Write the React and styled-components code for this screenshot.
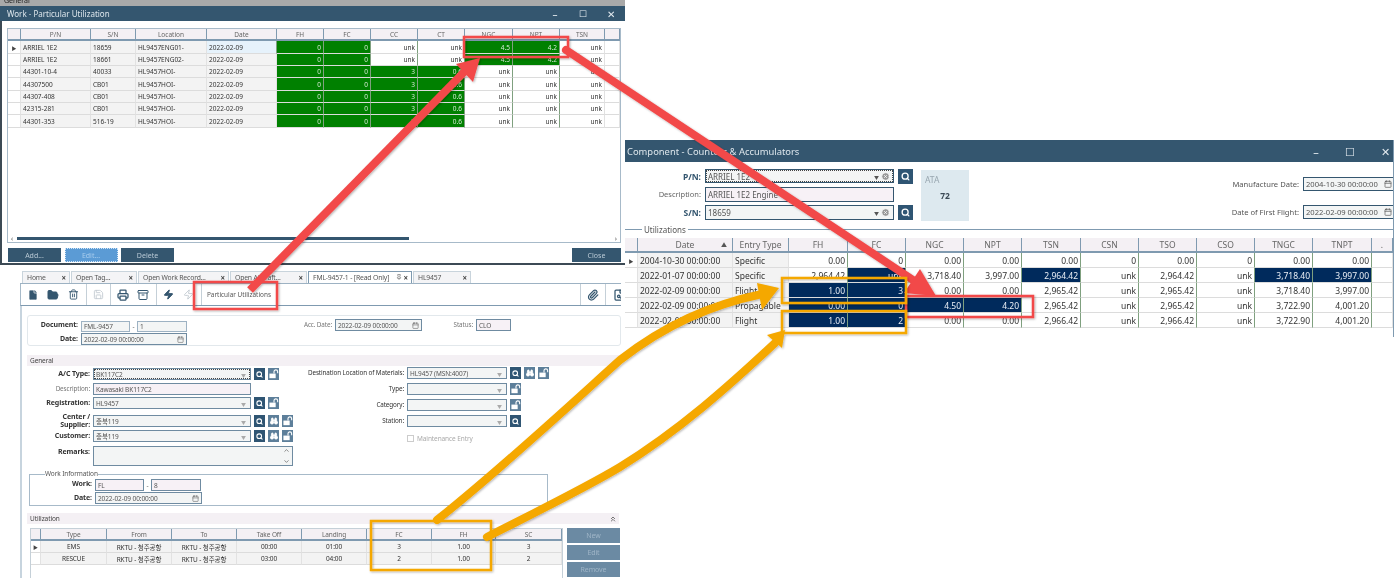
import React from 'react';
import styled, { createGlobalStyle } from 'styled-components';
import { File, FolderOpen, Trash2, Save, Printer, Archive, Zap, Paperclip, FileSearch, Search, Binoculars, Calendar, ChevronUp, ChevronDown, ChevronsUp, Pin, CircleX } from 'lucide-react';

const Global = createGlobalStyle`
  html, body { margin: 0; padding: 0; background: #fff; }
  * { box-sizing: border-box; }
  body { font-family: "Noto Sans", "Noto Sans CJK KR", sans-serif; color: #333; }
`;

const Desk = styled.div`
  position: relative;
  width: 1394px;
  height: 578px;
  overflow: hidden;
  background: #fff;
  filter: blur(0.35px);
`;

const Window = styled.div`
  position: absolute;
  left: ${({ $x }) => $x}px;
  top: ${({ $y }) => $y}px;
  width: ${({ $w }) => $w}px;
  height: ${({ $h }) => $h}px;
  background: #fff;
  overflow: hidden;
  display: flex;
  flex-direction: column;
`;

const ComponentFrame = styled(Window)`
  border-right: 1.5px solid #7f9ab0;
`;

const TopStrip = styled.div`
  height: 6px;
  flex: none;
  background: #a9a9a9;
  font-size: 7px;
  line-height: 2px;
  padding-left: 4px;
  color: #222;
  overflow: hidden;
`;

const TitleBar = styled.div`
  flex: none;
  height: ${({ $h }) => $h}px;
  background: #34566f;
  color: #dde6ec;
  font-size: ${({ $fs }) => $fs}px;
  display: flex;
  align-items: center;
  padding: 0 0 0 2px;
`;

const TitleText = styled.span`
  flex: 1;
  padding-left: ${({ $pl }) => $pl || 0}px;
`;

const Ctl = styled.span`
  width: ${({ $w }) => $w}px;
  padding-left: ${({ $pl }) => $pl || 0}px;
  text-align: center;
  color: #e4ebf0;
  font-size: ${({ $fs }) => $fs || 10}px;
`;

const W1Body = styled.div`
  flex: 1;
  display: flex;
  flex-direction: column;
  border-left: 2px solid #3c4a55;
  border-bottom: 2px solid #3c4a55;
  padding: 7px 4px 1px 5px;
`;

const GridBox = styled.div`
  flex: 1;
  display: flex;
  flex-direction: column;
  border: 1px solid #a7bac9;
`;

const Table = styled.div`
  display: grid;
  grid-template-columns: ${({ $cols }) => $cols};
  grid-auto-rows: ${({ $rowH }) => $rowH}px;
  flex: ${({ $grow }) => ($grow ? 1 : 'none')};
  align-content: start;
  font-size: ${({ $fs }) => $fs}px;
`;

const Head = styled.div`
  background: #f4f0f4;
  border-right: 1px solid #7f9ab0;
  border-bottom: 2px solid #7f9ab0;
  color: #666;
  display: flex;
  align-items: center;
  justify-content: center;
  white-space: nowrap;
  overflow: hidden;
  position: relative;
`;

const Cell = styled.div`
  background: ${({ $bg }) => $bg || '#fff'};
  color: ${({ $fg }) => $fg || '#333'};
  border-right: 1px solid ${({ $bg }) => ($bg && $bg !== '#f3f3f3' ? '#7fa07f' : '#e2e2e2')};
  border-bottom: 1px solid #dcdcdc;
  display: flex;
  align-items: center;
  justify-content: ${({ $al }) => ($al === 'r' ? 'flex-end' : $al === 'c' ? 'center' : 'flex-start')};
  padding: 0 2px;
  white-space: nowrap;
  overflow: hidden;
`;

const RowMark = styled(Cell)`
  justify-content: center;
  font-size: 5px;
  color: #444;
  background: #fff;
  padding: 0;
`;

const ScrollTrack = styled.div`
  height: 8px;
  display: flex;
  align-items: center;
  font-size: 7px;
  color: #555;
  padding: 0 3px;
`;

const ScrollThumb = styled.div`
  width: 392px;
  height: 3px;
  margin: 0 5px 0 4px;
  background: #34566f;
`;

const ScrollRest = styled.div`
  flex: 1;
  height: 3px;
  background: #fff;
  margin-right: 4px;
`;

const BtnRow = styled.div`
  display: flex;
  gap: 3.5px;
  padding: 5px 0 0 1px;
`;

const DarkBtn = styled.div`
  width: ${({ $w }) => $w}px;
  height: 14px;
  margin-left: ${({ $ml }) => $ml || 0};
  background: ${({ $on }) => ($on ? '#5b9bd5' : '#34566f')};
  color: ${({ $on }) => ($on ? '#a8cdee' : '#b9c9d5')};
  border: ${({ $on }) => ($on ? '1px dotted #d2e6f7' : 'none')};
  font-size: 7px;
  display: flex;
  align-items: center;
  justify-content: center;
`;

const Tabs = styled.div`
  flex: none;
  height: 13px;
  display: flex;
  gap: 1px;
  padding-left: 2px;
  border-bottom: 1px solid #9db2c3;
  font-size: 6.8px;
  letter-spacing: -0.15px;
`;

const Tab = styled.div`
  width: ${({ $w }) => $w}px;
  background: ${({ $active }) => ($active ? '#fff' : '#f4f4f6')};
  border: 1px solid ${({ $active }) => ($active ? '#7f9ab0' : '#c9d4dc')};
  border-bottom: none;
  display: flex;
  align-items: center;
  justify-content: space-between;
  padding: 0 3px 1px 4px;
  color: #555;
  white-space: nowrap;
  overflow: hidden;
`;

const TabClose = styled.span`
  font-size: 8px;
  color: #444;
  font-weight: 700;
  display: flex;
  align-items: center;
  gap: 2px;
`;

const Toolbar = styled.div`
  flex: none;
  height: 22px;
  display: flex;
  padding-left: 2px;
  overflow: hidden;
  border-left: 1px solid #a7bac9;
  border-bottom: 1px solid #7f9ab0;
  color: #34566f;
`;

const ToolGroup = styled.div`
  flex: none;
  display: flex;
  align-items: center;
  padding-right: ${({ $pr }) => $pr}px;
  margin-right: ${({ $mr }) => $mr}px;
  margin-left: ${({ $ml }) => $ml || 0};
  border-right: ${({ $noline }) => ($noline ? 'none' : '1px solid #c5d0d8')};
  border-left: ${({ $lline }) => ($lline ? '1px solid #c5d0d8' : 'none')};
`;

const Tool = styled.span`
  width: ${({ $w }) => $w || 20}px;
  display: flex;
  justify-content: center;
  color: ${({ $off }) => ($off ? '#c4ccd2' : '#34566f')};
`;

const ToolText = styled.span`
  font-size: 6.4px;
  color: #555;
  padding-left: 5px;
  align-self: center;
`;

const W2Body = styled.div`
  flex: 1;
  border-left: 2px solid #c7d4de;
  padding: 9px 0 0 5px;
  display: flex;
  flex-direction: column;
  font-size: 6.5px;
  letter-spacing: -0.1px;
`;

const DocBox = styled.div`
  height: 31px;
  flex: none;
  border: 1px solid #e2e8ec;
  border-radius: 3px;
  display: grid;
  grid-template-columns: 53px 107px 147px 89px 52px 1fr;
  grid-template-rows: 14px 12px;
  padding-top: 3px;
  margin-bottom: 9px;
`;

const Label = styled.div`
  height: 12px;
  display: flex;
  align-items: center;
  justify-content: flex-end;
  text-align: right;
  padding-right: 3px;
  color: ${({ $dim }) => ($dim ? '#777' : '#333')};
  font-weight: ${({ $bold }) => ($bold ? 700 : 400)};
  font-size: ${({ $bold }) => ($bold ? 7 : 6.3)}px;
  line-height: 8px;
  white-space: nowrap;
`;

const Field = styled.div`
  position: relative;
  width: ${({ $w }) => ($w ? `${$w}px` : '100%')};
  height: ${({ $h }) => $h || 12}px;
  background: ${({ $bg }) => $bg || '#f3f5f5'};
  border: 1px solid ${({ $line }) => $line || '#6f8ba1'};
  border-top-width: 1.5px;
  color: #555;
  font-size: ${({ $fs }) => $fs || 6.5}px;
  display: flex;
  align-items: center;
  justify-content: space-between;
  padding: 0 2px;
  white-space: nowrap;
  overflow: hidden;
  outline: ${({ $dotted }) => ($dotted ? '1px dotted #444' : 'none')};
  outline-offset: -2px;
`;

const Caret = styled.span`
  color: ${({ $dark }) => ($dark ? '#555' : '#aaa')};
  font-size: 5px;
  margin-left: auto;
  padding-right: 2px;
`;

const ClearIcon = styled(CircleX)`
  flex: none;
  margin-right: 1px;
`;

const Dash = styled.span`
  width: 7px;
  text-align: center;
  color: #666;
`;

const FieldLine = styled.div`
  display: flex;
  align-items: center;
`;

const SectionBar = styled.div`
  height: 11px;
  flex: none;
  margin-right: 2px;
  background: #f4f0f4;
  padding-left: 3px;
  color: #444;
  display: flex;
  align-items: center;
  justify-content: space-between;
  padding-right: 2px;
`;

const GeneralGrid = styled.div`
  display: grid;
  flex: none;
  grid-template-columns: 273px 1fr;
  height: 104px;
  padding-top: 2px;
`;

const Column = styled.div`
  display: grid;
  grid-template-rows: ${({ $rows }) => $rows};
  margin-top: ${({ $mt }) => $mt || 0}px;
`;

const FormRow = styled.div`
  display: grid;
  grid-template-columns: ${({ $label }) => $label}px ${({ $field }) => $field}px 1fr;
  align-items: start;
`;

const BtnSet = styled.div`
  display: flex;
  gap: 3px;
  padding-left: 3px;
`;

const Square = styled.span`
  width: 11px;
  height: 12px;
  background: ${({ $soft }) => ($soft ? '#5d7f9a' : '#2f5573')};
  color: #fff;
  display: flex;
  align-items: center;
  justify-content: center;
`;

const CheckLine = styled.div`
  display: flex;
  align-items: center;
  gap: 3px;
  color: #aaa;
  padding-left: 107px;
`;

const CheckBox = styled.span`
  width: 7px;
  height: 7px;
  border: 1px solid #ccc;
`;

const WorkSet = styled.fieldset`
  margin: 0 73px 7px 2px;
  padding: 0;
  flex: none;
  height: 36px;
  border: 1px solid #a7bac9;
  display: grid;
  grid-template-columns: 65px 1fr;
  grid-template-rows: 14px 12px;
  align-content: start;
  min-width: 0;
`;

const SetLegend = styled.legend`
  margin-left: 15px;
  padding: 0;
  font-size: 6.5px;
  line-height: 8px;
  color: #555;
  background: #fff;
`;

const UtilArea = styled.div`
  display: flex;
  gap: 4px;
  padding: 4px 0 0 3px;
`;

const UtilGrid = styled.div`
  width: 533px;
  height: 60px;
  border: 1px solid #c5d0d8;
`;

const SideBtns = styled.div`
  width: 53px;
  display: flex;
  flex-direction: column;
  gap: 2px;
`;

const SideBtn = styled.div`
  height: 15px;
  background: #6b8aa3;
  color: #9fb5c7;
  font-size: 7px;
  display: flex;
  align-items: center;
  justify-content: center;
`;

const W3Form = styled.div`
  flex: none;
  height: 64px;
  display: flex;
  padding-top: 7px;
`;

const W3Left = styled.div`
  width: 296px;
  display: grid;
  grid-template-rows: 18px 18px 16px;
  font-size: 8.5px;
`;

const W3Row = styled.div`
  display: grid;
  grid-template-columns: 80px 189px 18px;
  align-items: start;
`;

const W3Label = styled.div`
  text-align: right;
  padding: 2px 4px 0 0;
  font-size: ${({ $small }) => ($small ? 7.5 : 8.5)}px;
  font-weight: ${({ $small }) => ($small ? 400 : 700)};
  color: ${({ $small }) => ($small ? '#666' : '#34566f')};
`;

const BigSquare = styled(Square)`
  width: 15px;
  height: 15px;
  margin-left: 4px;
`;

const AtaBox = styled.div`
  width: 48px;
  height: 51px;
  background: #dde9ef;
  color: #99a7b0;
  font-size: 8.5px;
  padding: 4px 0 0 4px;
  margin-top: 1px;
`;

const AtaValue = styled.div`
  font-weight: 700;
  color: #3b4a55;
  text-align: center;
  padding: 5px 4px 0 0;
`;

const W3Dates = styled.div`
  margin-left: auto;
  display: grid;
  grid-template-columns: auto 92px;
  grid-template-rows: 28px 14px;
  column-gap: 4px;
  padding-top: 8px;
  margin-right: -2px;
  font-size: 8px;
  color: #555;
`;

const DateCaption = styled.span`
  text-align: right;
  line-height: 14px;
  font-size: 7.6px;
`;

const W3Legend = styled.div`
  flex: none;
  height: 8px;
  margin: -1px 0 5px;
  font-size: 8px;
  color: #555;
  display: flex;
  align-items: center;
  gap: 2px;
`;

const LegendStub = styled.span`
  width: ${({ $w }) => ($w ? `${$w}px` : 'auto')};
  flex: ${({ $w }) => ($w ? 'none' : 1)};
  height: 1px;
  background: #7f9ab0;
`;

const Arrows = styled.svg`
  position: absolute;
  left: 0;
  top: 0;
  width: 1394px;
  height: 578px;
  pointer-events: none;
`;

const SortMark = styled.span`
  position: absolute;
  right: 5px;
  font-size: 6px;
  color: #555;
`;

const ScrollCol = styled.span`
  display: flex;
  flex-direction: column;
  justify-content: space-between;
  height: 100%;
  color: #444;
`;

const W1_COLS = '13px 70px 45px 71px 70px 47px 47px 47px 47px 48px 47px 45px 1fr';
const GREEN = '#008000';
const NAVY = '#002a5c';

const w1Rows = [
  ['ARRIEL 1E2', '18659', 'HL9457ENG01-', '0', '0', 'unk', 'unk', '4.5', '4.2'],
  ['ARRIEL 1E2', '18661', 'HL9457ENG02-', '0', '0', 'unk', 'unk', '4.5', '4.2'],
  ['44301-10-4', '40033', 'HL9457HOI-', '0', '0', '3', '0.6', 'unk', 'unk'],
  ['44307500', 'CB01', 'HL9457HOI-', '0', '0', '3', '0.6', 'unk', 'unk'],
  ['44307-408', 'CB01', 'HL9457HOI-', '0', '0', '3', '0.6', 'unk', 'unk'],
  ['42315-281', 'CB01', 'HL9457HOI-', '0', '0', '3', '0.6', 'unk', 'unk'],
  ['44301-353', '516-19', 'HL9457HOI-', '0', '0', '3', '0.6', 'unk', 'unk'],
];

const W3_COLS = '13px 95px 56px 59px 58px 58px 58px 59px 58px 58px 58px 58px 59px 1fr';
const w3Rows = [
  { v: ['2004-10-30 00:00:00', 'Specific', '0.00', '0', '0.00', '0.00', '0.00', '0', '0.00', '0', '0.00', '0.00'], hi: [] },
  { v: ['2022-01-07 00:00:00', 'Specific', '2,964.42', 'unk', '3,718.40', '3,997.00', '2,964.42', 'unk', '2,964.42', 'unk', '3,718.40', '3,997.00'], hi: [3, 6, 10, 11] },
  { v: ['2022-02-09 00:00:00', 'Flight', '1.00', '3', '0.00', '0.00', '2,965.42', 'unk', '2,965.42', 'unk', '3,718.40', '3,997.00'], hi: [2, 3] },
  { v: ['2022-02-09 00:00:01', 'Propagable', '0.00', '0', '4.50', '4.20', '2,965.42', 'unk', '2,965.42', 'unk', '3,722.90', '4,001.20'], hi: [2, 3, 4, 5] },
  { v: ['2022-02-09 00:00:00', 'Flight', '1.00', '2', '0.00', '0.00', '2,966.42', 'unk', '2,966.42', 'unk', '3,722.90', '4,001.20'], hi: [2, 3] },
];

const UTIL_COLS = '10px 66px 65px 65px 65px 65px 65px 64px 1fr';
const utilRows = [
  ['EMS', 'RKTU - 청주공항', 'RKTU - 청주공항', '00:00', '01:00', '3', '1.00', '3'],
  ['RESCUE', 'RKTU - 청주공항', 'RKTU - 청주공항', '03:00', '04:00', '2', '1.00', '2'],
];

const tabs = [
  ['Home', 48],
  ['Open Tag...', 66],
  ['Open Work Record...', 91],
  ['Open Aircraft...', 77],
  ['FML-9457-1 - [Read Only]', 104],
  ['HL9457', 58],
];

// open padlock: body low on the left, shackle up on the right
function UnlockGlyph() {
  return (
    <svg width="10" height="10" viewBox="0 0 12 12">
      <rect x="0.5" y="5.5" width="7.5" height="5.5" fill="#fff" />
      <path d="M6 5.5V3.2a2.2 2.2 0 0 1 4.4 0V5" stroke="#fff" strokeWidth="1.3" fill="none" />
    </svg>
  );
}

function W1Table() {
  return (
    <Table $cols={W1_COLS} $rowH={12.35} $fs={6.5} $grow>
      {['', 'P/N', 'S/N', 'Location', 'Date', 'FH', 'FC', 'CC', 'CT', 'NGC', 'NPT', 'TSN', ''].map((h, i) => (
        <Head key={i}>{h}</Head>
      ))}
      {w1Rows.map((r, ri) => (
        <React.Fragment key={ri}>
          <RowMark>{ri === 0 ? '▶' : ''}</RowMark>
          <Cell $bg="#f3f3f3">{r[0]}</Cell>
          <Cell $bg="#f3f3f3">{r[1]}</Cell>
          <Cell $bg="#f3f3f3">{r[2]}</Cell>
          <Cell $bg={ri === 0 ? '#e6f2fb' : '#f3f3f3'}>2022-02-09</Cell>
          {r.slice(3).map((v, i) => (
            <Cell key={i} $al="r" $bg={v === 'unk' ? '#fff' : GREEN} $fg={v === 'unk' ? '#333' : '#d4e8d4'}>{v}</Cell>
          ))}
          <Cell $al="r">unk</Cell>
          <Cell />
        </React.Fragment>
      ))}
    </Table>
  );
}

function Combo({ w, text, bg, dotted }) {
  return (
    <Field $w={w} $bg={bg} $dotted={dotted}>
      {text}
      <Caret>▼</Caret>
    </Field>
  );
}

function DateField({ w, text }) {
  return (
    <Field $w={w}>
      {text}
      <Calendar size={7} color="#666" />
    </Field>
  );
}

function Btns({ search, bino, lock }) {
  return (
    <BtnSet>
      {search && <Square><Search size={7} strokeWidth={3.5} /></Square>}
      {bino && <Square $soft><Binoculars size={8} strokeWidth={2.5} fill="#fff" /></Square>}
      {lock && <Square $soft><UnlockGlyph /></Square>}
    </BtnSet>
  );
}

function Row2({ label, bold, dim, text, bg, noCaret, dotted, ...btn }) {
  return (
    <FormRow $label={66} $field={158}>
      <Label $bold={bold} $dim={dim}>{label}</Label>
      {noCaret ? <Field $bg={bg}>{text}</Field> : <Combo text={text} bg={bg} dotted={dotted} />}
      <Btns {...btn} />
    </FormRow>
  );
}

function RowRight({ label, text, ...btn }) {
  return (
    <FormRow $label={107} $field={100}>
      <Label>{label}</Label>
      <Combo text={text} />
      <Btns {...btn} />
    </FormRow>
  );
}

function ScrollBtns() {
  return (
    <ScrollCol>
      <ChevronUp size={7} />
      <ChevronDown size={7} />
    </ScrollCol>
  );
}

function WorkWindow() {
  return (
    <Window $x={20} $y={271} $w={601} $h={307}>
      <Tabs>
        {tabs.map(([t, w], i) => (
          <Tab key={t} $w={w} $active={i === 4}>
            {t}
            <TabClose>{i === 4 && <Pin size={6} />}×</TabClose>
          </Tab>
        ))}
      </Tabs>
      <Toolbar>
        <ToolGroup $pr={3} $mr={1}>
          <Tool><File size={12} fill="#34566f" color="#fff" strokeWidth={1.5} /></Tool>
          <Tool><FolderOpen size={12} fill="#34566f" strokeWidth={2} /></Tool>
          <Tool><Trash2 size={11} strokeWidth={2} /></Tool>
        </ToolGroup>
        <ToolGroup $pr={2} $mr={2}>
          <Tool $off><Save size={11} strokeWidth={2} /></Tool>
        </ToolGroup>
        <ToolGroup $pr={3} $mr={1}>
          <Tool><Printer size={12} strokeWidth={2.5} /></Tool>
          <Tool><Archive size={12} strokeWidth={2} /></Tool>
        </ToolGroup>
        <ToolGroup $pr={3} $mr={0}>
          <Tool><Zap size={11} fill="#34566f" /></Tool>
          <Tool $off><Zap size={11} /></Tool>
        </ToolGroup>
        <ToolText>Particular Utilizations</ToolText>
        <ToolGroup $noline $lline $ml="auto" $pr={0} $mr={0}>
          <Tool $w={24}><Paperclip size={12} strokeWidth={2.5} /></Tool>
        </ToolGroup>
        <ToolGroup $noline $lline $pr={0} $mr={-11}>
          <Tool $w={26}><FileSearch size={12} strokeWidth={2.5} /></Tool>
        </ToolGroup>
      </Toolbar>
      <W2Body>
        <DocBox>
          <Label $bold>Document:</Label>
          <FieldLine>
            <Field $w={49} $h={11} $line="#9db2c3">FML-9457</Field>
            <Dash>-</Dash>
            <Field $w={50} $h={11} $line="#9db2c3">1</Field>
          </FieldLine>
          <Label $dim>Acc. Date:</Label>
          <DateField w={87} text="2022-02-09 00:00:00" />
          <Label $dim>Status:</Label>
          <Field $w={35} $h={12} $bg="#f7f1f6">CLO</Field>
          <Label $bold>Date:</Label>
          <DateField w={106} text="2022-02-09 00:00:00" />
        </DocBox>
        <SectionBar>General</SectionBar>
        <GeneralGrid>
          <Column $rows="15px 14px 18px 15px 16px 20px">
            <Row2 label="A/C Type:" bold text="BK117C2" search lock dotted />
            <Row2 label="Description:" dim text="Kawasaki BK117C2" bg="#f7f1f6" noCaret />
            <Row2 label="Registration:" bold text="HL9457" search lock />
            <Row2 label={<>Center /<br />Supplier:</>} bold text="충북119" search bino lock />
            <Row2 label="Customer:" bold text="충북119" search bino lock />
            <FormRow $label={66} $field={200}>
              <Label $bold>Remarks:</Label>
              <Field $h={20} $bg="#f3f5f5">
                <span />
                <ScrollBtns />
              </Field>
            </FormRow>
          </Column>
          <Column $rows="16px 16px 16px 16px 14px" $mt={-1}>
            <RowRight label="Destination Location of Materials:" text="HL9457 (MSN:4007)" search bino lock />
            <RowRight label="Type:" text="" lock />
            <RowRight label="Category:" text="" lock />
            <RowRight label="Station:" text="" search />
            <CheckLine><CheckBox />Maintenance Entry</CheckLine>
          </Column>
        </GeneralGrid>
        <WorkSet>
          <SetLegend>Work Information</SetLegend>
          <Label $bold>Work:</Label>
          <FieldLine>
            <Field $w={49} $bg="#f7f1f6">FL</Field>
            <Dash>-</Dash>
            <Field $w={50} $bg="#f7f1f6">8</Field>
          </FieldLine>
          <Label $bold>Date:</Label>
          <DateField w={107} text="2022-02-09 00:00:00" />
        </WorkSet>
        <SectionBar>
          Utilization
          <ChevronsUp size={8} color="#333" />
        </SectionBar>
        <UtilArea>
          <UtilGrid>
            <Table $cols={UTIL_COLS} $rowH={12} $fs={6.5}>
              {['', 'Type', 'From', 'To', 'Take Off', 'Landing', 'FC', 'FH', 'SC'].map((h, i) => (
                <Head key={i}>{h}</Head>
              ))}
              {utilRows.map((r, ri) => (
                <React.Fragment key={ri}>
                  <RowMark>{ri === 0 ? '▶' : ''}</RowMark>
                  {r.map((v, i) => (
                    <Cell key={i} $al="c" $bg="#f3f3f3">{v}</Cell>
                  ))}
                </React.Fragment>
              ))}
            </Table>
          </UtilGrid>
          <SideBtns>
            <SideBtn>New</SideBtn>
            <SideBtn>Edit</SideBtn>
            <SideBtn>Remove</SideBtn>
          </SideBtns>
        </UtilArea>
      </W2Body>
    </Window>
  );
}

function ComponentWindow() {
  return (
    <ComponentFrame $x={625} $y={140} $w={769} $h={197}>
      <TitleBar $h={22} $fs={9.4}>
        <TitleText>Component - Counters &amp; Accumulators</TitleText>
        <Ctl $w={34} $fs={11}>–</Ctl>
        <Ctl $w={34} $fs={11}>☐</Ctl>
        <Ctl $w={26} $pl={10} $fs={11}>✕</Ctl>
      </TitleBar>
      <W3Form>
        <W3Left>
          <W3Row>
            <W3Label>P/N:</W3Label>
            <Field $h={14} $fs={8} $line="#34566f" $dotted>
              ARRIEL 1E2
              <Caret $dark>▼</Caret>
              <ClearIcon size={9} fill="#999" color="#fff" />
            </Field>
            <BigSquare><Search size={9} strokeWidth={3.5} /></BigSquare>
          </W3Row>
          <W3Row>
            <W3Label $small>Description:</W3Label>
            <Field $h={15} $fs={8} $bg="#f7f1f6" $line="#34566f">ARRIEL 1E2 Engine</Field>
          </W3Row>
          <W3Row>
            <W3Label>S/N:</W3Label>
            <Field $h={15} $fs={8} $line="#34566f">
              18659
              <Caret $dark>▼</Caret>
              <ClearIcon size={9} fill="#999" color="#fff" />
            </Field>
            <BigSquare><Search size={9} strokeWidth={3.5} /></BigSquare>
          </W3Row>
        </W3Left>
        <AtaBox>
          ATA
          <AtaValue>72</AtaValue>
        </AtaBox>
        <W3Dates>
          <DateCaption>Manufacture Date:</DateCaption>
          <Field $h={14} $fs={7.6} $line="#34566f">2004-10-30 00:00:00<Calendar size={8} /></Field>
          <DateCaption>Date of First Flight:</DateCaption>
          <Field $h={14} $fs={7.6} $line="#34566f">2022-02-09 00:00:00<Calendar size={8} /></Field>
        </W3Dates>
      </W3Form>
      <W3Legend>
        <LegendStub $w={17} />
        Utilizations
        <LegendStub />
      </W3Legend>
      <Table $cols={W3_COLS} $rowH={15} $fs={8.5}>
        {['', 'Date', 'Entry Type', 'FH', 'FC', 'NGC', 'NPT', 'TSN', 'CSN', 'TSO', 'CSO', 'TNGC', 'TNPT', '.'].map((h, i) => (
          <Head key={i}>{h}{i === 1 && <SortMark>▲</SortMark>}</Head>
        ))}
        {w3Rows.map((r, ri) => (
          <React.Fragment key={ri}>
            <RowMark>{ri === 0 ? '▶' : ''}</RowMark>
            {r.v.map((v, i) => (
              <Cell
                key={i}
                $al={i < 2 ? 'l' : 'r'}
                $bg={r.hi.includes(i) ? NAVY : i < 2 ? '#f3f3f3' : '#fff'}
                $fg={r.hi.includes(i) ? '#e8eef5' : '#333'}
              >
                {v}
              </Cell>
            ))}
            <Cell />
          </React.Fragment>
        ))}
      </Table>
    </ComponentFrame>
  );
}

function Annotations() {
  const red = '#f24a4a';
  const orange = '#f5a800';
  return (
    <Arrows viewBox="0 0 1394 578">
      <defs>
        <filter id="sh" x="-10%" y="-10%" width="120%" height="120%">
          <feDropShadow dx="1" dy="1" stdDeviation="1" floodColor="#000" floodOpacity="0.3" />
        </filter>
      </defs>
      <g filter="url(#sh)">
        <path d="M250 290 L470 66" stroke={red} strokeWidth="8" fill="none" />
        <polygon points="480,58 456,64 473,82" fill={red} />
        <path d="M566 50 L916 282" stroke={red} strokeWidth="8" strokeLinecap="round" fill="none" />
        <polygon points="936,296 904,293 920,269" fill={red} />
        <g fill="none" stroke={red} strokeWidth="2.5">
          <rect x="464" y="37" width="104" height="20" />
          <rect x="194" y="282" width="83" height="27" />
          <rect x="906" y="296" width="127" height="21" />
        </g>
      </g>
      <g filter="url(#sh)">
        <path d="M437 520 C500 470 570 405 620 360 C665 325 710 305 762 294" stroke={orange} strokeWidth="8" strokeLinecap="round" fill="none" />
        <polygon points="779,288 757,283 762,310" fill={orange} />
        <path d="M487 537 C540 510 585 488 620 467 C680 430 730 385 775 343" stroke={orange} strokeWidth="8" strokeLinecap="round" fill="none" />
        <polygon points="785,330 767,335 782,348" fill={orange} />
        <g fill="none" stroke={orange} strokeWidth="2.5">
          <rect x="782" y="278" width="124" height="25" />
          <rect x="782" y="311" width="124" height="22" />
          <rect x="371" y="521" width="120" height="49" />
        </g>
      </g>
    </Arrows>
  );
}

const App = () => (
  <>
    <Global />
    <Desk>
      <Window $x={0} $y={0} $w={625} $h={265}>
        <TopStrip>General</TopStrip>
        <TitleBar $h={15} $fs={8}>
          <TitleText $pl={5}>Work - Particular Utilization</TitleText>
          <Ctl $w={28}>–</Ctl>
          <Ctl $w={28} $fs={9}>☐</Ctl>
          <Ctl $w={28}>✕</Ctl>
        </TitleBar>
        <W1Body>
          <GridBox>
            <W1Table />
            <ScrollTrack>
              ‹<ScrollThumb /><ScrollRest />›
            </ScrollTrack>
          </GridBox>
          <BtnRow>
            <DarkBtn $w={53}>Add...</DarkBtn>
            <DarkBtn $w={53} $on>Edit...</DarkBtn>
            <DarkBtn $w={53}>Delete</DarkBtn>
            <DarkBtn $w={49} $ml="auto">Close</DarkBtn>
          </BtnRow>
        </W1Body>
      </Window>
      <WorkWindow />
      <ComponentWindow />
      <Annotations />
    </Desk>
  </>
);

export default App;
